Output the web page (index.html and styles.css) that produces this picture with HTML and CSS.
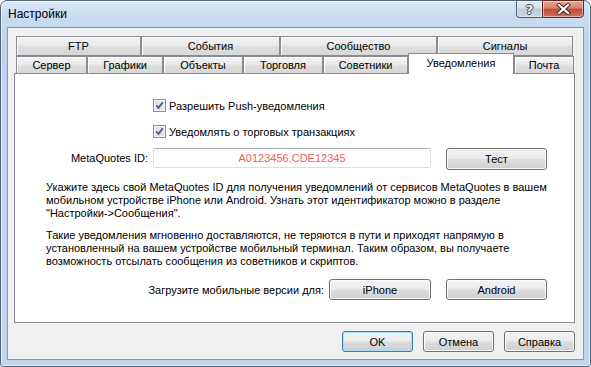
FILE: index.html
```html
<!DOCTYPE html>
<html lang="ru">
<head>
  <meta charset="UTF-8">
  <title>Настройки</title>
  <link rel="stylesheet" href="styles.css">
</head>
<body>
  <div class="window">
    <div class="titlebar">
      <span class="title">Настройки</span>
      <div class="caption">
        <div class="cap help"><span>?</span></div>
        <div class="cap close">
          <svg width="15" height="12" viewBox="0 0 15 12">
            <path d="M3 2l9 8M12 2l-9 8" stroke="#3b2420" stroke-width="4" stroke-linecap="square"/>
            <path d="M3 2l9 8M12 2l-9 8" stroke="#fff" stroke-width="2.2" stroke-linecap="square"/>
          </svg>
        </div>
      </div>
    </div>

    <div class="client">
      <div class="tabctl">
        <div class="tabrow back">
          <div class="tab t-ftp">FTP</div>
          <div class="tab t-events">События</div>
          <div class="tab t-community">Сообщество</div>
          <div class="tab t-signals">Сигналы</div>
        </div>
        <div class="tabrow front">
          <div class="tab t-server">Сервер</div>
          <div class="tab t-charts">Графики</div>
          <div class="tab t-objects">Объекты</div>
          <div class="tab t-trade">Торговля</div>
          <div class="tab t-experts">Советники</div>
          <div class="tab t-notify selected">Уведомления</div>
          <div class="tab t-mail">Почта</div>
        </div>

        <div class="panel">
          <label class="check first">
            <svg class="box" width="13" height="13" viewBox="0 0 13 13">
              <rect x="0.5" y="0.5" width="12" height="12" fill="#f6f6f6" stroke="#8e8f8f"/>
              <rect x="2" y="2" width="9" height="9" fill="#e2e4e7"/>
              <path d="M3.3 6.4l2.2 2.4 4.3-5.6" fill="none" stroke="#4a5e8e" stroke-width="1.8"/>
            </svg>
            Разрешить Push-уведомления
          </label>
          <label class="check">
            <svg class="box" width="13" height="13" viewBox="0 0 13 13">
              <rect x="0.5" y="0.5" width="12" height="12" fill="#f6f6f6" stroke="#8e8f8f"/>
              <rect x="2" y="2" width="9" height="9" fill="#e2e4e7"/>
              <path d="M3.3 6.4l2.2 2.4 4.3-5.6" fill="none" stroke="#4a5e8e" stroke-width="1.8"/>
            </svg>
            Уведомлять о торговых транзакциях
          </label>

          <div class="id-row">
            <span class="id-label">MetaQuotes ID:</span>
            <div class="id-input">A0123456,CDE12345</div>
            <button class="btn test">Тест</button>
          </div>

          <p class="note first">Укажите здесь свой MetaQuotes ID для получения уведомлений от сервисов MetaQuotes в вашем<br>мобильном устройстве iPhone или Android. Узнать этот идентификатор можно в разделе<br>"Настройки-&gt;Сообщения".</p>
          <p class="note">Такие уведомления мгновенно доставляются, не теряются в пути и приходят напрямую в<br>установленный на вашем устройстве мобильный терминал. Таким образом, вы получаете<br>возможность отсылать сообщения из советников и скриптов.</p>

          <div class="download-row">
            <span class="dl-label">Загрузите мобильные версии для:</span>
            <button class="btn store iphone">iPhone</button>
            <button class="btn store">Android</button>
          </div>
        </div>
      </div>

      <div class="dlg-buttons">
        <button class="btn dlg default">OK</button>
        <button class="btn dlg">Отмена</button>
        <button class="btn dlg">Справка</button>
      </div>
    </div>
  </div>
</body>
</html>
```

FILE: styles.css
```css
body {
  margin: 0;
  font-family: "Liberation Sans", Arial, sans-serif;
  font-size: 11px;
  color: #000;
  background: #fff;
}

/* window frame */
.window {
  width: 591px;
  height: 367px;
  box-sizing: border-box;
  border: 1px solid #56667a;
  border-radius: 7px 7px 3px 3px;
  padding: 0 6px 6px;
  display: flex;
  flex-direction: column;
  background: linear-gradient(180deg, #dbe8f6 0, #c9dcf1 14px, #bfd4ec 40px, #c2d7ee 100%);
  box-shadow: inset 0 0 0 1px rgba(255, 255, 255, 0.55);
}
.titlebar {
  height: 26px;
  display: flex;
  justify-content: space-between;
  align-items: flex-start;
}
.title {
  padding: 6px 0 0 1px;
  font-size: 12px;
  line-height: 15px;
}
.caption {
  display: flex;
  margin-top: -1px;
}
.cap {
  height: 18px;
  box-sizing: border-box;
  border: 1px solid #4a5a70;
  display: flex;
  align-items: center;
  justify-content: center;
  box-shadow: inset 0 0 0 1px rgba(255, 255, 255, 0.45);
}
.help {
  width: 26px;
  border-right: none;
  border-radius: 0 0 0 4px;
  background: linear-gradient(180deg, #e6ecf4 0%, #d6dfea 45%, #bcc9d9 50%, #c9d5e3 100%);
}
.help span {
  font-family: "DejaVu Sans", sans-serif;
  font-weight: bold;
  font-size: 13px;
  line-height: 13px;
  color: #eef1f5;
  text-shadow: -1px 0 #3f4b5c, 1px 0 #3f4b5c, 0 -1px #3f4b5c, 0 1px #3f4b5c;
}
.close {
  width: 42px;
  border-radius: 0 0 4px 0;
  border-color: #5b2a24;
  background: linear-gradient(180deg, #e9a898 0%, #d9806f 45%, #c24a38 50%, #d0705b 100%);
}

/* client area */
.client {
  flex: 1;
  border: 1px solid #8799b0;
  background: #f0f0f0;
}
.tabctl {
  margin: 8px 8px 0 6px;
}
.tabrow {
  display: flex;
  padding-left: 2px;
}
.tabrow.back {
  height: 20px;
}
.tabrow.front {
  height: 17px;
  align-items: flex-end;
}
.tab {
  box-sizing: border-box;
  height: 100%;
  border: 1px solid #898c95;
  border-bottom: none;
  text-align: center;
  line-height: 18px;
  background: linear-gradient(180deg, #f3f3f3 0%, #ebebeb 45%, #dedede 55%, #d7d7d7 100%);
  box-shadow: inset 1px 1px 0 #fcfcfc;
}
.back .tab {
  border-bottom: 1px solid #898c95;
  line-height: 19px;
}
.front .tab {
  line-height: 17px;
}
.tab.selected {
  position: relative;
  z-index: 1;
  height: 21px;
  margin-bottom: -1px;
  background: #fff;
  box-shadow: none;
  line-height: 19px;
}
.t-ftp { width: 125px; }
.t-events { width: 139px; }
.t-community { width: 157px; }
.t-signals { width: 136px; }
.t-server { width: 71px; }
.t-charts { width: 76px; }
.t-objects { width: 80px; }
.t-trade { width: 80px; }
.t-experts { width: 85px; }
.t-notify { width: 106px; }
.t-mail { width: 60px; }

.panel {
  height: 250px;
  box-sizing: border-box;
  border: 1px solid #898c95;
  background: #fff;
}
.check {
  display: flex;
  align-items: center;
  height: 13px;
  margin: 13px 0 0 138px;
}
.check.first {
  margin-top: 25px;
}
.check .box {
  margin-right: 3px;
  flex: none;
}
.id-row {
  display: flex;
  align-items: flex-start;
  height: 22px;
  margin-top: 10px;
}
.id-label {
  width: 133px;
  margin-right: 5px;
  text-align: right;
  line-height: 20px;
}
.id-input {
  width: 278px;
  height: 20px;
  box-sizing: border-box;
  margin-right: 15px;
  border: 1px solid #dcdfe4;
  border-top-color: #abadb3;
  border-radius: 2px;
  text-align: center;
  line-height: 18px;
  color: #f2605a;
}
.note {
  margin: 9px 0 0 31px;
  line-height: 13px;
  white-space: nowrap;
}
.note.first {
  margin-top: 11px;
}
.download-row {
  display: flex;
  justify-content: flex-end;
  align-items: center;
  height: 21px;
  margin-top: 11px;
  padding-right: 27px;
}
.dl-label {
  margin-right: 5px;
}

/* buttons */
.btn {
  height: 21px;
  box-sizing: border-box;
  padding: 0;
  border: 1px solid #707070;
  border-radius: 3px;
  font-family: inherit;
  font-size: 11px;
  color: #000;
  background: linear-gradient(180deg, #f2f2f2 0%, #ebebeb 48%, #dddddd 52%, #cfcfcf 100%);
  box-shadow: inset 0 0 0 1px #fbfbfb;
}
.btn.test {
  width: 101px;
  height: 22px;
}
.btn.store {
  width: 101px;
}
.btn.iphone {
  width: 102px;
  margin-right: 15px;
}
.dlg-buttons {
  display: flex;
  justify-content: flex-end;
  gap: 10px;
  margin: 8px 8px 0 0;
}
.btn.dlg {
  width: 71px;
}
.btn.default {
  border-color: #3c7fb1;
  box-shadow: inset 0 0 0 1px #a9dcf4;
}
```
